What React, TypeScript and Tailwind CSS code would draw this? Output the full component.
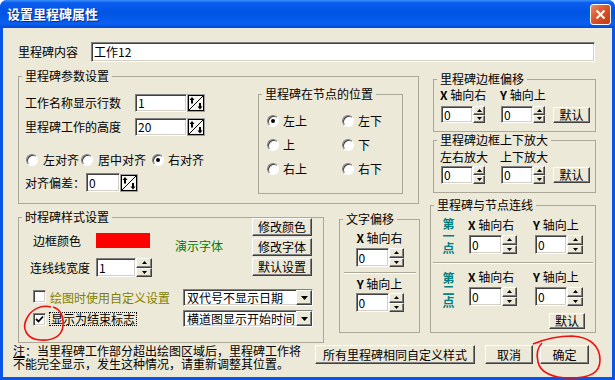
import type { ReactNode } from "react";

const sunken =
  "bg-white border border-t-[#808080] border-l-[#808080] border-r-white border-b-white shadow-[inset_1px_1px_0_#404040,inset_-1px_-1px_0_#d4d0c8]";
const raised =
  "bg-[#ECE9D8] border border-t-white border-l-white border-r-[#404040] border-b-[#404040] shadow-[inset_-1px_-1px_0_#808080]";

function Field({ className, value }: { className: string; value: string }) {
  return (
    <div className={`${sunken} ${className} flex items-center pl-[2px] leading-none`}>
      {value}
    </div>
  );
}

function Spin({ className }: { className: string }) {
  return (
    <div className={`flex flex-col ${className}`}>
      <div className={`${raised} flex-1 flex items-center justify-center`}>
        <svg width="5" height="3" viewBox="0 0 5 3">
          <path d="M2.5 0L5 3H0z" fill="#000" />
        </svg>
      </div>
      <div className={`${raised} flex-1 flex items-center justify-center`}>
        <svg width="5" height="3" viewBox="0 0 5 3">
          <path d="M0 0H5L2.5 3z" fill="#000" />
        </svg>
      </div>
    </div>
  );
}

// the odd one-piece up/down button used in 参数设置
function SpinIcon() {
  return (
    <svg width="18" height="18" viewBox="0 0 18 18" className="shrink-0">
      <rect x="0.5" y="0.5" width="17" height="17" fill="#fff" stroke="#a0a0a0" />
      <rect x="1.5" y="1.5" width="15" height="15" fill="#f7f6f1" stroke="#000" />
      <line x1="2" y1="16" x2="16" y2="2" stroke="#000" />
      <path d="M5 3L2.5 6H4V9.5H6V6H7.5Z" fill="#000" />
      <path d="M13 15.5L10.5 12.5H12V9H14V12.5H15.5Z" fill="#000" />
    </svg>
  );
}

function Btn({ className, children }: { className: string; children: ReactNode }) {
  return (
    <div className={`${raised} ${className} flex items-center justify-center leading-none shrink-0`}>
      {children}
    </div>
  );
}

function Radio({ checked, className = "" }: { checked?: boolean; className?: string }) {
  return (
    <span
      className={`inline-flex shrink-0 items-center justify-center w-[12px] h-[12px] rounded-full border border-t-[#808080] border-l-[#808080] border-r-white border-b-white bg-white shadow-[inset_1px_1px_0_#404040] ${className}`}
    >
      {checked && <span className="w-[4px] h-[4px] rounded-full bg-black" />}
    </span>
  );
}

function Check({ checked }: { checked?: boolean }) {
  return (
    <span className={`${sunken} inline-flex shrink-0 items-center justify-center w-[13px] h-[13px]`}>
      {checked && (
        <svg width="9" height="9" viewBox="0 0 9 9">
          <path d="M1 4L3.5 6.5L8 1.5" stroke="#000" strokeWidth="1.8" fill="none" />
        </svg>
      )}
    </span>
  );
}

function Combo({ value }: { value: string }) {
  return (
    <div className={`${sunken} ml-auto mr-[10px] w-[130px] h-[17px] flex items-center`}>
      <span className="pl-[3px] flex-1 whitespace-nowrap leading-[14px]">{value}</span>
      <div className={`${raised} w-[16px] h-full flex items-center justify-center shrink-0`}>
        <svg width="7" height="4" viewBox="0 0 7 4">
          <path d="M0 0H7L3.5 4z" fill="#000" />
        </svg>
      </div>
    </div>
  );
}

function Group({ title, className, children }: { title: string; className: string; children?: ReactNode }) {
  return (
    <fieldset className={`border border-[#aca899] shrink-0 ${className}`}>
      <legend className="ml-[3px] px-[3px] leading-[14px]">{title}</legend>
      {children}
    </fieldset>
  );
}

function Axis({ a, rest }: { a: string; rest: string }) {
  return (
    <span className="whitespace-nowrap">
      <span className="font-bold">{a}</span> {rest}
    </span>
  );
}

function Sep({ className }: { className: string }) {
  return <div className={`h-[2px] border-t border-t-[#aca899] border-b border-b-white ${className}`} />;
}

function PointRow({ label, top }: { label: string; top: string }) {
  return (
    <div className="flex items-start">
      <div className={`ml-[11px] w-[12px] leading-[12px] font-bold text-[#008080] [writing-mode:vertical-rl] ${top}`}>
        {label}
      </div>
      <div className="ml-[14px] flex flex-col">
        <div className="mt-[6px] h-[14px] flex">
          <span className="w-[65px]"><Axis a="X" rest="轴向右" /></span>
          <Axis a="Y" rest="轴向上" />
        </div>
        <div className="mt-[3px] flex">
          <Field className="ml-[1px] w-[33px] h-[19px]" value="0" />
          <Spin className="w-[15px] h-[19px]" />
          <Field className="ml-[18px] w-[32px] h-[19px]" value="0" />
          <Spin className="w-[16px] h-[19px]" />
        </div>
      </div>
    </div>
  );
}

export default function App() {
  return (
    <div className="w-[615px] h-[380px] bg-white relative overflow-hidden font-['Noto_Sans_CJK_SC',sans-serif] text-[12px] leading-[14px] text-black">
      <div className="w-full h-full flex flex-col rounded-t-[7px] bg-[#0b55e6]">
        {/* title bar */}
        <div className="h-[28px] shrink-0 flex items-center rounded-t-[7px] bg-[linear-gradient(180deg,#3a8ffa_0%,#0a5df0_10%,#0054e3_45%,#0860f0_85%,#0348d6_100%)]">
          <span className="ml-[7px] text-white font-bold text-[13px] [text-shadow:1px_1px_0_#0a2a8a]">
            设置里程碑属性
          </span>
          <div className="ml-auto mr-[4px] w-[21px] h-[21px] rounded-[3px] border border-white bg-[linear-gradient(135deg,#ec8a68_0%,#d9542c_45%,#c23a10_100%)] flex items-center justify-center">
            <svg width="11" height="11" viewBox="0 0 11 11">
              <path d="M1.5 1.5L9.5 9.5M9.5 1.5L1.5 9.5" stroke="#fff" strokeWidth="2.2" />
            </svg>
          </div>
        </div>

        {/* body */}
        <div className="flex-1 mx-[3px] mb-[3px] bg-[#ECE9D8] flex flex-col">
          <div className="mt-[14px] ml-[15px] flex items-center h-[20px]">
            <span className="w-[73px]">里程碑内容</span>
            <Field className="w-[504px] h-[20px]" value="工作12" />
          </div>

          <div className="mt-[7px] ml-[15px] flex">
            {/* left column */}
            <div className="w-[412px] flex flex-col shrink-0">
              <Group title="里程碑参数设置" className="w-[401px] h-[135px]">
                <div className="flex">
                  <div className="w-[239px] pl-[6px] flex flex-col">
                    <div className="mt-[11px] h-[18px] flex items-center">
                      <span className="w-[110px]">工作名称显示行数</span>
                      <Field className="w-[52px] h-[18px]" value="1" />
                      <SpinIcon />
                    </div>
                    <div className="mt-[6px] h-[18px] flex items-center">
                      <span className="w-[110px]">里程碑工作的高度</span>
                      <Field className="w-[52px] h-[18px]" value="20" />
                      <SpinIcon />
                    </div>
                    <div className="mt-[17px] h-[14px] flex items-center whitespace-nowrap">
                      <Radio className="ml-[1px]" />
                      <span className="ml-[5px]">左对齐</span>
                      <Radio className="ml-[2px]" />
                      <span className="ml-[5px]">居中对齐</span>
                      <Radio className="ml-[6px]" checked />
                      <span className="ml-[4px]">右对齐</span>
                    </div>
                    <div className="mt-[6px] h-[19px] flex items-center">
                      <span className="w-[61px]">对齐偏差：</span>
                      <Field className="w-[34px] h-[19px]" value="0" />
                      <SpinIcon />
                    </div>
                  </div>
                  <Group title="里程碑在节点的位置" className="mt-[4px] w-[145px] h-[107px]">
                    <div className="grid grid-cols-[75px_60px] pl-[8px] mt-[13px] gap-y-[10px]">
                      <div className="flex items-center h-[14px]"><Radio checked /><span className="ml-[4px]">左上</span></div>
                      <div className="flex items-center h-[14px]"><Radio /><span className="ml-[4px]">左下</span></div>
                      <div className="flex items-center h-[14px]"><Radio /><span className="ml-[4px]">上</span></div>
                      <div className="flex items-center h-[14px]"><Radio /><span className="ml-[4px]">下</span></div>
                      <div className="flex items-center h-[14px]"><Radio /><span className="ml-[4px]">右上</span></div>
                      <div className="flex items-center h-[14px]"><Radio /><span className="ml-[4px]">右下</span></div>
                    </div>
                  </Group>
                </div>
              </Group>

              <div className="flex mt-[6px] items-start">
                <Group title="时程碑样式设置" className="w-[306px] h-[133px]">
                  <div className="flex items-start">
                    <div className="flex flex-col w-[233px]">
                      <div className="flex items-start mt-[9px] h-[15px]">
                        <span className="ml-[14px] mt-[1px] w-[63px]">边框颜色</span>
                        <span className="w-[54px] h-[15px] bg-[#ff0000]" />
                        <span className="ml-[25px] mt-[6px] text-[#008000] whitespace-nowrap">演示字体</span>
                      </div>
                      <div className="flex items-center mt-[10px] h-[19px]">
                        <span className="ml-[11px] w-[66px]">连线线宽度</span>
                        <Field className="w-[40px] h-[19px]" value="1" />
                        <Spin className="w-[16px] h-[19px]" />
                      </div>
                    </div>
                    <div className="flex flex-col gap-[2px] -mt-[6px]">
                      <Btn className="w-[60px] h-[18px]">修改颜色</Btn>
                      <Btn className="w-[60px] h-[18px]">修改字体</Btn>
                      <Btn className="w-[60px] h-[18px]">默认设置</Btn>
                    </div>
                  </div>
                  <div className="mt-[12px] h-[17px] flex items-center">
                    <span className="ml-[14px]"><Check /></span>
                    <span className="ml-[4px] text-[#808000] whitespace-nowrap">绘图时使用自定义设置</span>
                    <Combo value="双代号不显示日期" />
                  </div>
                  <div className="mt-[4px] h-[17px] flex items-center">
                    <span className="ml-[14px]"><Check checked /></span>
                    <span className="ml-[3px] px-[1px] border border-dotted border-black leading-[12px] whitespace-nowrap">
                      显示为结束标志
                    </span>
                    <Combo value="横道图显示开始时间" />
                  </div>
                </Group>

                <Group title="文字偏移" className="ml-[15px] mt-[2px] w-[81px] h-[121px]">
                  <div className="flex flex-col items-center">
                    <span className="mt-[5px] h-[14px]"><Axis a="X" rest="轴向右" /></span>
                    <div className="mt-[3px] flex">
                      <Field className="w-[33px] h-[19px]" value="0" />
                      <Spin className="w-[15px] h-[19px]" />
                    </div>
                    <Sep className="mt-[5px] w-[72px]" />
                    <span className="mt-[3px] h-[14px]"><Axis a="Y" rest="轴向上" /></span>
                    <div className="mt-[2px] flex">
                      <Field className="w-[33px] h-[19px]" value="0" />
                      <Spin className="w-[15px] h-[19px]" />
                    </div>
                  </div>
                </Group>
              </div>
            </div>

            {/* right column */}
            <div className="w-[166px] flex flex-col shrink-0">
              <Group title="里程碑边框偏移" className="ml-[3px] mt-[3px] w-[163px] h-[60px]">
                <div className="pl-[6px]">
                  <div className="flex mt-[2px] h-[14px]">
                    <span className="w-[60px]"><Axis a="X" rest="轴向右" /></span>
                    <Axis a="Y" rest="轴向上" />
                  </div>
                  <div className="flex items-center mt-[4px]">
                    <Field className="ml-[1px] w-[32px] h-[17px]" value="0" />
                    <Spin className="w-[12px] h-[17px]" />
                    <Field className="ml-[16px] w-[32px] h-[17px]" value="0" />
                    <Spin className="w-[12px] h-[17px]" />
                    <Btn className="ml-[8px] w-[37px] h-[16px]">默认</Btn>
                  </div>
                </div>
              </Group>

              <Group title="里程碑边框上下放大" className="ml-[3px] mt-[1px] w-[163px] h-[60px]">
                <div className="pl-[6px]">
                  <div className="flex mt-[3px] h-[14px]">
                    <span className="w-[60px]">左右放大</span>
                    <span>上下放大</span>
                  </div>
                  <div className="flex items-center mt-[2px]">
                    <Field className="ml-[1px] w-[32px] h-[18px]" value="0" />
                    <Spin className="w-[12px] h-[18px]" />
                    <Field className="ml-[16px] w-[32px] h-[18px]" value="0" />
                    <Spin className="w-[12px] h-[18px]" />
                    <Btn className="ml-[8px] w-[37px] h-[16px]">默认</Btn>
                  </div>
                </div>
              </Group>

              <Group title="里程碑与节点连线" className="mt-[5px] w-[166px] h-[135px]">
                <PointRow label="第一点" top="mt-[6px]" />
                <Sep className="mt-[8px] mx-[2px]" />
                <PointRow label="第二点" top="mt-[8px]" />
                <Btn className="mt-[5px] ml-[118px] w-[36px] h-[16px]">默认</Btn>
              </Group>
            </div>
          </div>

          {/* note + buttons */}
          <div className="mt-[1px] ml-[10px] flex items-start">
            <div className="w-[302px] shrink-0 leading-[13px] whitespace-nowrap">
              <span className="underline">注</span>：当里程碑工作部分超出绘图区域后，里程碑工作将
              <br />
              不能完全显示，发生这种情况，请重新调整其位置。
            </div>
            <Btn className="mt-[1px] w-[160px] h-[19px]">所有里程碑相同自定义样式</Btn>
            <Btn className="mt-[1px] ml-[10px] w-[48px] h-[19px]">取消</Btn>
            <Btn className="mt-[1px] ml-[7px] w-[49px] h-[19px]">确定</Btn>
          </div>
        </div>
      </div>

      {/* hand-drawn red marks over the screenshot */}
      <svg className="absolute inset-0 pointer-events-none" width="615" height="380" viewBox="0 0 615 380">
        <path
          d="M51 307C41 304 31 310 27 318C21 329 27 339 40 340C53 341 62 336 63 326C64 316 60 309 53 307"
          stroke="#f01010"
          strokeWidth="1.6"
          fill="none"
        />
        <path
          d="M533 344C545 339 556 336 572 336C590 337 600 346 600 360C600 373 590 378 570 378C552 378 540 372 538 362C536 354 537 348 542 343"
          stroke="#f01010"
          strokeWidth="1.6"
          fill="none"
        />
      </svg>
    </div>
  );
}
